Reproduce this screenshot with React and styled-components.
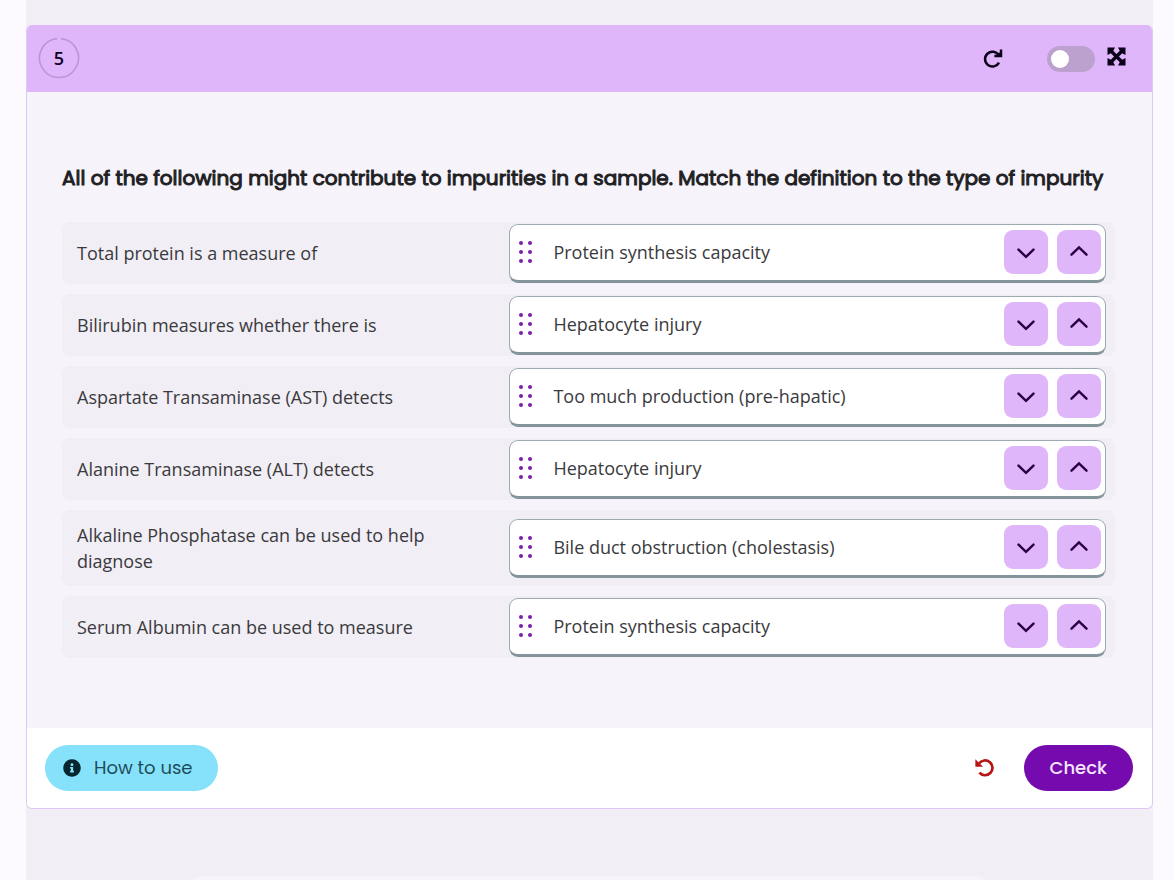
import { useState } from "react";
import styled, { createGlobalStyle } from "styled-components";
import { FaInfoCircle } from "react-icons/fa";

const GlobalStyle = createGlobalStyle`
  * {
    box-sizing: border-box;
  }

  body {
    margin: 0;
    background: #fcfaff;
    font-family: "Open Sans", "Noto Sans", sans-serif;
    font-size: 18px;
    line-height: 26px;
    color: #3a3a3d;
  }

  button {
    font: inherit;
    border: none;
    padding: 0;
    cursor: pointer;
  }
`;

const Stage = styled.main`
  display: flex;
  flex-direction: column;
  height: 100vh;
  overflow: hidden;
  margin: 0 21px 0 26px;
  padding-top: 25px;
  background: #f1eef5;
`;

const Card = styled.section`
  flex: none;
  border: 1px solid #dfc8f7;
  border-top: none;
  border-radius: 6px;
  background: #f6f3fb;
  overflow: hidden;
`;

const CardHeader = styled.header`
  display: flex;
  align-items: center;
  height: 67px;
  padding: 0 26px 0 11px;
  background: #e0b6fb;
  color: #0f0024;
`;

const StepBadge = styled.div`
  display: grid;
  place-items: center;
  width: 42px;
  height: 42px;
  margin: 0 auto 2px 0;
  font-weight: 600;

  svg,
  span {
    grid-area: 1 / 1;
  }
`;

const IconButton = styled.button`
  display: flex;
  background: none;
  color: ${(props) => props.$color || "#0a0018"};
`;

const ExpandButton = styled(IconButton)`
  margin-bottom: 4px;
`;

const Switch = styled.input`
  appearance: none;
  display: flex;
  align-items: center;
  width: 48px;
  height: 26px;
  margin: 0 12px 0 44px;
  padding: 0 4px;
  border-radius: 13px;
  background: #bca1cf;
  cursor: pointer;

  &::before {
    content: "";
    width: 18px;
    height: 18px;
    border-radius: 50%;
    background: white;
  }

  &:checked {
    justify-content: flex-end;
    background: #750aae;
  }
`;

const CardBody = styled.div`
  padding: 73px 37px 70px 35px;
`;

const Question = styled.h1`
  margin: 0 0 31px;
  font-family: Poppins, Inter, sans-serif;
  font-size: 20px;
  font-weight: 400;
  line-height: 26px;
  color: #202022;
  -webkit-text-stroke: 1px #202022;
`;

const MatchList = styled.ul`
  display: grid;
  gap: 10px;
  margin: 0;
  padding: 0;
  list-style: none;
`;

const MatchRow = styled.li`
  display: grid;
  grid-template-columns: 3fr 4fr;
  align-items: center;
  min-height: 62px;
  padding-right: 9px;
  border-radius: 8px;
  background: #f1eef5;
`;

const Prompt = styled.div`
  padding: 12px 15px;
`;

const Answer = styled.div`
  display: flex;
  align-items: center;
  height: 59px;
  padding: 0 4px 0 8px;
  border: 1px solid #9dabb0;
  border-bottom: 3px solid #83959b;
  border-radius: 9px;
  background: white;
`;

const AnswerText = styled.span`
  flex: 1;
  margin-left: 20px;
`;

const MoveButton = styled.button`
  display: grid;
  place-items: center;
  width: 44px;
  height: 44px;
  margin-left: 9px;
  border-radius: 9px;
  background: #e0b6fb;
  color: #2c0046;
`;

const CardFooter = styled.footer`
  display: flex;
  align-items: center;
  justify-content: space-between;
  height: 80px;
  padding: 0 19px 0 18px;
  background: white;
`;

const Actions = styled.div`
  display: flex;
  align-items: center;
  gap: 29px;
`;

const PillButton = styled.button`
  display: flex;
  align-items: center;
  gap: 13px;
  height: 46px;
  padding: ${(props) => (props.$primary ? "0 26px" : "0 25px 0 18px")};
  border-radius: 23px;
  background: ${(props) => (props.$primary ? "#750aae" : "#86e1fa")};
  color: ${(props) => (props.$primary ? "#f7e6ff" : "#1d4d5a")};
  font-family: Poppins, Inter, sans-serif;
  font-weight: ${(props) => (props.$primary ? 500 : 400)};

  svg {
    color: #06272f;
  }
`;

const NextPanel = styled.div`
  flex: none;
  height: 40px;
  margin: 67px 164px 0;
  border-radius: 12px;
  background: #f6f3fb;
`;

const prompts = [
  "Total protein is a measure of",
  "Bilirubin measures whether there is",
  "Aspartate Transaminase (AST) detects",
  "Alanine Transaminase (ALT) detects",
  "Alkaline Phosphatase can be used to help diagnose",
  "Serum Albumin can be used to measure",
];

const initialAnswers = [
  "Protein synthesis capacity",
  "Hepatocyte injury",
  "Too much production (pre-hapatic)",
  "Hepatocyte injury",
  "Bile duct obstruction (cholestasis)",
  "Protein synthesis capacity",
];

const ReloadIcon = () => (
  <svg width="20" height="20" viewBox="0 0 20 20" fill="none" stroke="currentColor" strokeWidth="2.5">
    <path d="M16 13.6A7.4 7.4 0 1 1 15.6 6" />
    <path d="M18 0.6V7H11.4" />
    <path d="M17 3.2V6H14.2Z" fill="currentColor" stroke="none" />
  </svg>
);

const ExpandIcon = () => (
  <svg width="19" height="19" viewBox="0 0 19 19" fill="currentColor">
    <path d="M3 3L16 16M16 3L3 16" stroke="currentColor" strokeWidth="3.4" />
    <path d="M0.5 0.5H8L6.4 3.4L3.4 6.4L0.5 8Z" />
    <path d="M18.5 0.5H11L12.6 3.4L15.6 6.4L18.5 8Z" />
    <path d="M0.5 18.5H8L6.4 15.6L3.4 12.6L0.5 11Z" />
    <path d="M18.5 18.5H11L12.6 15.6L15.6 12.6L18.5 11Z" />
  </svg>
);

const UndoIcon = () => (
  <svg width="20" height="20" viewBox="0 0 20 20" fill="none">
    <path d="M4 5.6A7.4 7.4 0 1 1 4.4 14.6" stroke="currentColor" strokeWidth="2.7" />
    <path d="M0.4 1.2L8 8.8H0.4Z" fill="currentColor" />
  </svg>
);

const DragHandle = () => (
  <svg width="15" height="24" viewBox="0 0 15 24" fill="#7a1fae" aria-hidden="true">
    {[3, 12].map((x) =>
      [3, 12, 21].map((y) => <circle key={`${x}-${y}`} cx={x} cy={y} r="2" />)
    )}
  </svg>
);

const Chevron = ({ up }) => (
  <svg width="20" height="14" viewBox="0 0 20 14" fill="none" stroke="currentColor" strokeWidth="2.5" strokeLinecap="round">
    <path d={up ? "M2.5 9.6L10 2.4L17.5 9.6" : "M2.5 4.6L10 11.8L17.5 4.6"} />
  </svg>
);

const App = () => {
  const [answers, setAnswers] = useState(initialAnswers);
  const [enabled, setEnabled] = useState(false);

  const move = (from, to) => {
    if (to < 0 || to >= answers.length) return;
    const next = [...answers];
    [next[from], next[to]] = [next[to], next[from]];
    setAnswers(next);
  };

  const reset = () => setAnswers(initialAnswers);

  return (
    <>
      <GlobalStyle />
      <Stage>
        <Card>
          <CardHeader>
            <StepBadge>
              <svg width="42" height="42" viewBox="0 0 42 42" fill="none" aria-hidden="true">
                <path d="M23 1.6A19.5 19.5 0 1 1 19 1.6" stroke="#bd94d8" strokeWidth="1.6" />
              </svg>
              <span>5</span>
            </StepBadge>
            <IconButton aria-label="Reload" onClick={reset}>
              <ReloadIcon />
            </IconButton>
            <Switch
              type="checkbox"
              role="switch"
              aria-label="Toggle"
              checked={enabled}
              onChange={(e) => setEnabled(e.target.checked)}
            />
            <ExpandButton aria-label="Full screen">
              <ExpandIcon />
            </ExpandButton>
          </CardHeader>

          <CardBody>
            <Question>
              All of the following might contribute to impurities in a sample. Match the definition to the type of impurity
            </Question>
            <MatchList>
              {prompts.map((prompt, i) => (
                <MatchRow key={prompt}>
                  <Prompt>{prompt}</Prompt>
                  <Answer>
                    <DragHandle />
                    <AnswerText>{answers[i]}</AnswerText>
                    <MoveButton aria-label="Move down" onClick={() => move(i, i + 1)}>
                      <Chevron />
                    </MoveButton>
                    <MoveButton aria-label="Move up" onClick={() => move(i, i - 1)}>
                      <Chevron up />
                    </MoveButton>
                  </Answer>
                </MatchRow>
              ))}
            </MatchList>
          </CardBody>

          <CardFooter>
            <PillButton>
              <FaInfoCircle size={18} />
              How to use
            </PillButton>
            <Actions>
              <IconButton aria-label="Undo" $color="#b81414" onClick={reset}>
                <UndoIcon />
              </IconButton>
              <PillButton $primary>Check</PillButton>
            </Actions>
          </CardFooter>
        </Card>
        <NextPanel />
      </Stage>
    </>
  );
};

export default App;
